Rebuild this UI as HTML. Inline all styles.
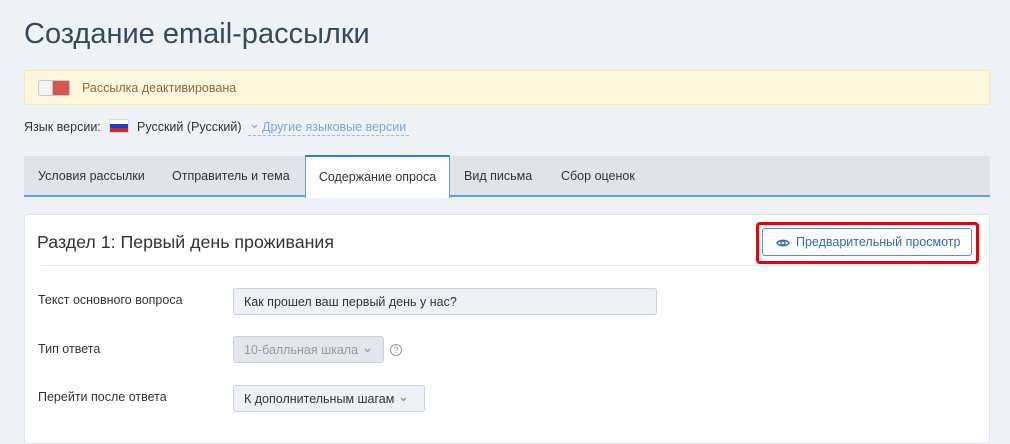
<!DOCTYPE html>
<html><head><meta charset="utf-8"><style>
*{box-sizing:border-box;margin:0;padding:0}
body{width:1010px;height:429px;overflow:hidden;background:#eef1f5;font-family:"Liberation Sans","DejaVu Sans",sans-serif;color:#333;position:relative;font-size:12.5px}
.abs{position:absolute}
h1{position:absolute;left:24px;top:18px;font-size:29px;font-weight:normal;color:#34495e}
.warn{left:24px;top:70px;width:966px;height:35px;background:#fdf7de;border:1px solid #f6e8b4;border-radius:2px}
.tog{left:13px;top:9px;width:32px;height:16px;border-radius:2px;background:#d9534f;border:1px solid #c9c9c9}
.tog i{position:absolute;left:0;top:0;width:14px;height:14px;background:#f4f4f4;border-right:1px solid #ccc}
.warn span{position:absolute;left:57px;top:10px;color:#8a6d3b}
.tabs{left:24px;top:156px;width:966px;height:41px;background:#e0e4ea;border-bottom:2px solid #5aa6e5}
.tab{position:absolute;top:13px;color:#333}
.act{left:281px;top:-1px;width:145px;height:43px;background:#fff;border:1px solid #5aa6e5;border-top:2px solid #2f7ed8;border-bottom:none;text-align:center;padding-top:13px}
.card{left:24px;top:214px;width:966px;height:230px;background:#fff;border:1px solid #dde2e8;border-radius:3px}
.inp{position:absolute;background:#edf0f4;border:1px solid #c9d3df;border-radius:3px;padding:8px 10px;height:27px;line-height:11px;white-space:nowrap}
.chev{display:inline-block;vertical-align:middle;margin-left:6px}
</style></head><body>
<h1>Создание email-рассылки</h1>
<div class="abs warn"><div class="abs tog"><i></i></div><span>Рассылка деактивирована</span></div>
<div class="abs" style="left:24px;top:120px">Язык версии:</div>
<div class="abs" style="left:109px;top:119px;width:20px;height:14px;border:1px solid #ddd;background:linear-gradient(#fff 0 33%,#1c3fc9 33% 66%,#d52b1e 66%)"></div>
<div class="abs" style="left:137px;top:120px">Русский (Русский)</div>
<div class="abs" style="left:248px;top:120px;color:#7ea7d8;border-bottom:1px dashed #9bb9e0;padding-bottom:1px;width:161px;white-space:nowrap"><svg class="chev" style="margin:0 4px 2px 3px" width="7" height="5" viewBox="0 0 7 5"><path d="M1 1L3.5 3.5L6 1" fill="none" stroke="#7ea7d8" stroke-width="1.2"/></svg>Другие языковые версии</div>
<div class="abs tabs">
<div class="tab" style="left:14px">Условия рассылки</div>
<div class="tab" style="left:148px">Отправитель и тема</div>
<div class="tab act">Содержание опроса</div>
<div class="tab" style="left:440px">Вид письма</div>
<div class="tab" style="left:537px">Сбор оценок</div>
</div>
<div class="abs card">
<div class="abs" style="left:12px;top:17px;font-size:17.8px;color:#333">Раздел 1: Первый день проживания</div>
<div class="abs" style="left:16px;top:50px;width:932px;height:1px;background:#e4e8ed"></div>
<div class="abs" style="left:731px;top:7px;width:223px;height:42px;border:3px solid #e8000b;border-radius:4px"></div>
<div class="abs" style="left:737px;top:13px;width:210px;height:28px;border:1px solid #5b8fd0;border-radius:3px;color:#2f6bb6;padding:6px 0 0 33px;white-space:nowrap">
<svg class="abs" style="left:13px;top:9px" width="14" height="10" viewBox="0 0 14 10"><path d="M1 5C3 1.5 11 1.5 13 5C11 8.5 3 8.5 1 5Z" fill="none" stroke="#2f6bb6" stroke-width="1.4"/><circle cx="7" cy="5" r="2" fill="none" stroke="#2f6bb6" stroke-width="1.4"/></svg>Предварительный просмотр</div>
<div class="abs" style="left:13px;top:78px">Текст основного вопроса</div>
<div class="inp" style="left:208px;top:73px;width:424px">Как прошел ваш первый день у нас?</div>
<div class="abs" style="left:13px;top:127px">Тип ответа</div>
<div class="inp" style="left:208px;top:121px;width:151px;color:#999;background:#e3e7ed">10-балльная шкала<svg class="chev" width="7" height="5" viewBox="0 0 7 5"><path d="M1 1L3.5 3.5L6 1" fill="none" stroke="#999" stroke-width="1.2"/></svg></div>
<div class="abs" style="left:365px;top:129px;width:12px;height:12px;border:1px solid #8a97a8;border-radius:50%;font-size:9px;color:#8a97a8;text-align:center;line-height:10px">?</div>
<div class="abs" style="left:13px;top:175px">Перейти после ответа</div>
<div class="inp" style="left:208px;top:170px;width:192px">К дополнительным шагам<svg class="chev" width="7" height="5" viewBox="0 0 7 5"><path d="M1 1L3.5 3.5L6 1" fill="none" stroke="#888" stroke-width="1.2"/></svg></div>
</div>
</body></html>
